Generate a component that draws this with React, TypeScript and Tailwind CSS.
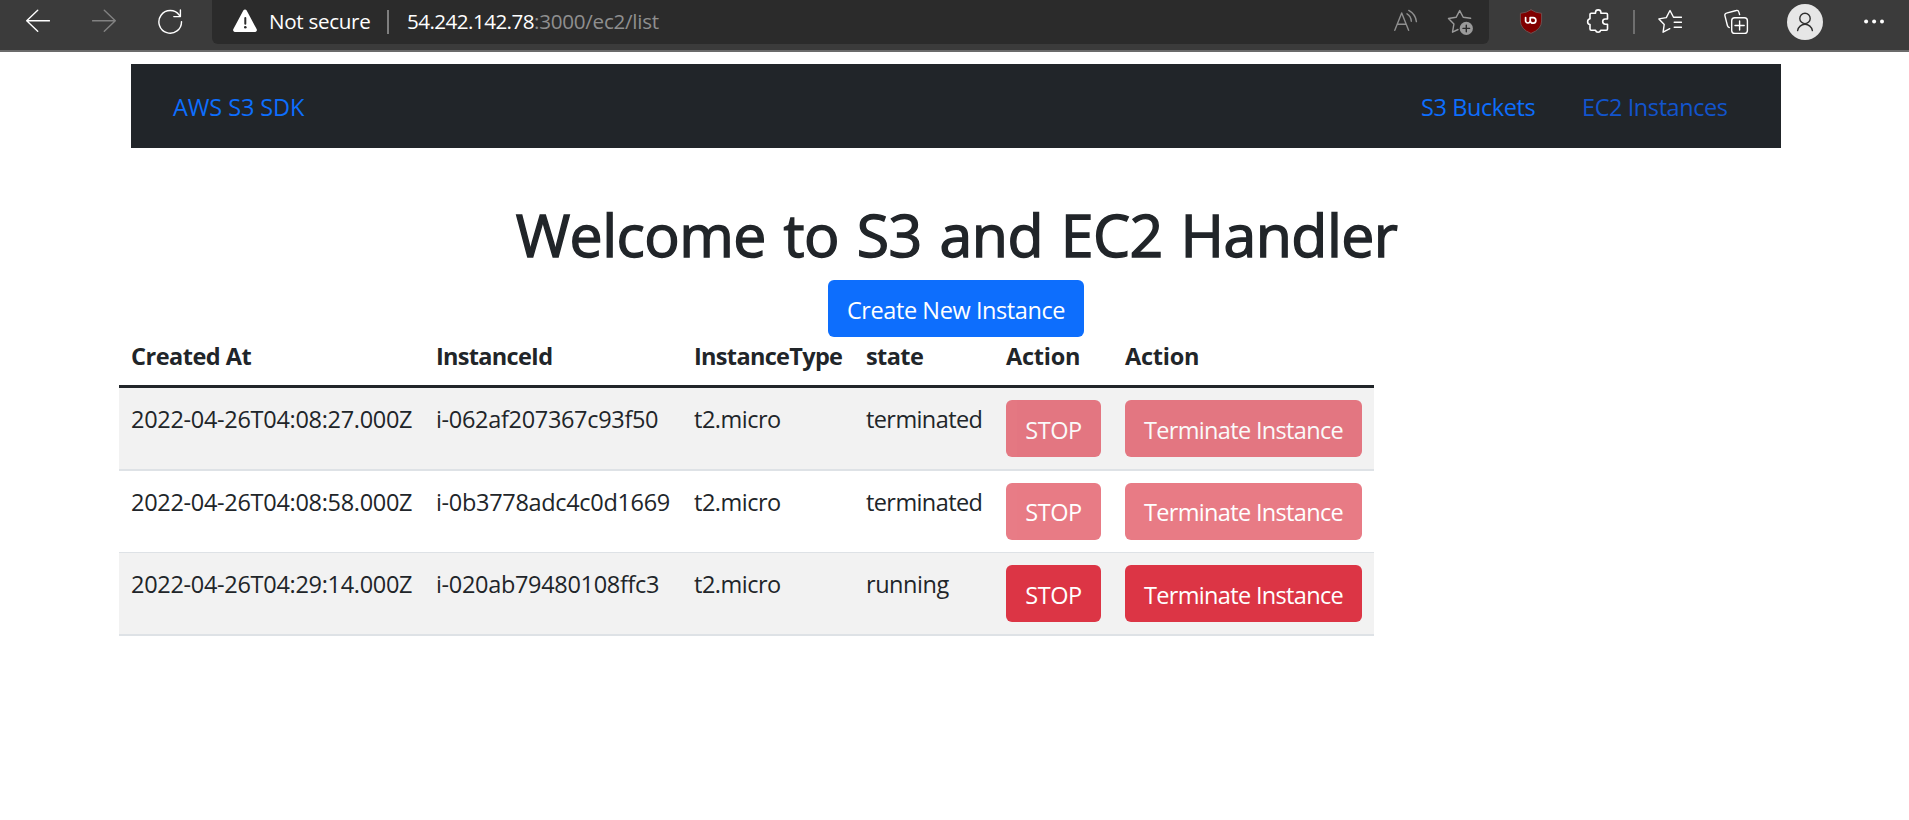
import type { ReactNode } from 'react';

type Row = {
  created: string;
  id: string;
  state: string;
  stateClass: string;
  cellClass: string;
  buttonClass: string;
  disabled: boolean;
};

const rows: Row[] = [
  {
    created: '2022-04-26T04:08:27.000Z',
    id: 'i-062af207367c93f50',
    state: 'terminated',
    stateClass: 'tracking-[-0.6px]',
    cellClass: 'h-[83px] border-b-2 bg-[#f2f2f2]',
    buttonClass: 'pt-3',
    disabled: true,
  },
  {
    created: '2022-04-26T04:08:58.000Z',
    id: 'i-0b3778adc4c0d1669',
    state: 'terminated',
    stateClass: 'tracking-[-0.6px]',
    cellClass: 'h-[82px] border-b bg-white',
    buttonClass: 'pt-[11px]',
    disabled: true,
  },
  {
    created: '2022-04-26T04:29:14.000Z',
    id: 'i-020ab79480108ffc3',
    state: 'running',
    stateClass: 'tracking-[-0.45px]',
    cellClass: 'h-[83px] border-b-2 bg-[#f2f2f2]',
    buttonClass: 'pt-3',
    disabled: false,
  },
];

const columns = [
  { label: 'Created At', width: 'w-[305px]', tracking: 'tracking-[-0.5px]' },
  { label: 'InstanceId', width: 'w-[258px]', tracking: 'tracking-[-0.7px]' },
  { label: 'InstanceType', width: 'w-[172px]', tracking: 'tracking-[-0.68px]' },
  { label: 'state', width: 'w-[140px]', tracking: 'tracking-[-0.6px]' },
  { label: 'Action', width: 'w-[119px]', tracking: 'tracking-[-0.25px]' },
  { label: 'Action', width: 'w-[261px]', tracking: 'tracking-[-0.25px]' },
];

function Icon({ children, className, size = 24 }: { children: ReactNode; className: string; size?: number }) {
  return (
    <svg
      width={size}
      height={size}
      viewBox={`0 0 ${size} ${size}`}
      fill="none"
      stroke="currentColor"
      strokeWidth="1.4"
      strokeLinecap="round"
      strokeLinejoin="round"
      className={`mt-[9px] shrink-0 ${className}`}
    >
      {children}
    </svg>
  );
}

function BrowserBar() {
  return (
    <header className="flex h-[52px] items-start border-b-2 border-[#6b6b6b] bg-[#3b3b3b] text-[20.6px] leading-[28px] text-white">
      <Icon className="ml-[26px]">
        <path d="M.7 11.7H23.4M11.7 1.2.7 11.7 11.7 22.2" />
      </Icon>
      <Icon className="ml-[42px] text-[#828282]">
        <path d="M.6 11.7H23.3M12.3 1.2l11 10.5-11 10.5" />
      </Icon>
      <Icon className="ml-[42px]" size={26}>
        <path d="M21.4 6.3A11.3 11.3 0 1 0 23.5 12.6M22.4 1v6.6H15.8" />
      </Icon>
      <div className="ml-7 flex h-11 w-[1277px] items-start rounded-b-md bg-[#2b2b2b]">
        <Icon className="ml-[21px]">
          <path d="M10.3 1.500a2 2 0 0 1 3.4 0l9.9 18.500a1.9 1.9 0 0 1-1.7 2.900H2.100A1.9 1.9 0 0 1 .4 20z" fill="#fff" stroke="none" />
          <path d="M12.3 9v5.8" stroke="#2b2b2b" strokeWidth="2" />
          <circle cx="12.3" cy="18.2" r="1.3" fill="#2b2b2b" stroke="none" />
        </Icon>
        <span className="mt-[7px] ml-3 w-[118px] tracking-[-0.3px] whitespace-nowrap">Not secure</span>
        <span className="mt-2.5 h-6 w-0.5 bg-[#7f7f7f]" />
        <span className="mt-[7px] ml-[18px] w-[127px] tracking-[-0.54px] whitespace-nowrap">54.242.142.78</span>
        <span className="mt-[7px] tracking-[-0.25px] whitespace-nowrap text-[#8f8f8f]">:3000/ec2/list</span>
        <Icon className="ml-auto text-[#8f8f8f]">
          <path d="M.8 21.3 7.7 4l6.9 17.3M3.2 15.3h9M13 4.8q4 2.4 4.300 7.4M14.8 1.4q6.8 3.800 7.6 11.2" />
        </Icon>
        <Icon className="mr-4 ml-[29px] text-[#9a9a9a]" size={26}>
          <path d="M23.6 9.3l-7.4-1L12.7 1.600 9.100 8.300l-7.600 1.200 5.400 5.600-1.400 8.100 5.500-2.700" />
          <circle cx="19.3" cy="19.4" r="6.6" fill="currentColor" stroke="none" />
          <path d="M19.3 16.1v6.6M16 19.4h6.6" stroke="#2b2b2b" />
        </Icon>
      </div>
      <Icon className="ml-[30px]" size={25}>
        <path d="M12 .8Q16.5 4 22.6 4.300V12q0 8.200-10.600 12.400Q1.400 20.200 1.400 12V4.300Q7.500 4 12 .8z" fill="#800000" stroke="#6b5050" strokeWidth="1" />
        <path d="M6.6 8.600v3a2.300 2.300 0 0 0 4.600.2V8.600h2.900a2.800 2.800 0 1 1-2.800 3.200" stroke="#fff" strokeWidth="1.7" />
      </Icon>
      <Icon className="ml-[42px]" size={25}>
        <path
          d="M5.200 4.300h4.300V3.600a2.700 2.700 0 0 1 5.400 0v.7h5.400a1.200 1.200 0 0 1 1.200 1.200v4.500h-2.200a2.600 2.600 0 0 0 0 5.200h2.200v4.900a1.200 1.200 0 0 1-1.200 1.200h-5.600a2.700 2.700 0 0 1-5.200 0H5.200a1.200 1.200 0 0 1-1.200-1.200v-4.600a2.900 2.900 0 0 1 0-5.700V5.500a1.200 1.200 0 0 1 1.200-1.200z"
          strokeWidth="1.6"
        />
      </Icon>
      <span className="mt-2.5 ml-[22px] h-6 w-0.5 bg-[#6f6f6f]" />
      <Icon className="ml-[23px]">
        <path d="M23.4 8.300h-7.900L12 1.500 8.300 8.600.9 9.900l5.300 5.600-1.100 7.700 6.700-3.500M16.200 13.300h7.200M16.200 18.300h7.200" />
      </Icon>
      <Icon className="ml-[41px]" size={26}>
        <path d="M16.6 5.600l-.8-2.700a2 2 0 0 0-2.500-1.400L3.400 4.100A2 2 0 0 0 1.900 6.600l2.500 9.900q.4 1.500 1.900 2.100" />
        <rect x="8.7" y="8.7" width="15.7" height="15.7" rx="3" />
        <path d="M16.6 11.9v9.2M12 16.5h9.2" />
      </Icon>
      <span className="mt-1 ml-[38px] flex size-9 shrink-0 rounded-full bg-[#e6e6e6]">
        <svg viewBox="0 0 36 36" fill="none" stroke="#2f2f2f" strokeWidth="1.4" strokeLinecap="round" className="size-9">
          <circle cx="18" cy="14.4" r="5.2" />
          <path d="M10.6 26.6a7.5 7.5 0 0 1 14.8 0" />
        </svg>
      </span>
      <Icon className="ml-[39px]">
        <g fill="currentColor" stroke="none">
          <circle cx="4.1" cy="12.5" r="2" />
          <circle cx="12.1" cy="12.5" r="2" />
          <circle cx="20" cy="12.5" r="2" />
        </g>
      </Icon>
    </header>
  );
}

export default function App() {
  return (
    <div className="h-[820px] overflow-hidden bg-white font-['Open_Sans',sans-serif] text-[23.5px] leading-9 whitespace-nowrap text-[#212529]">
      <BrowserBar />
      <nav className="mt-3 ml-[131px] flex h-[84px] w-[1650px] items-start bg-[#212529] pt-[25px] pl-[42px] text-[#0d6efd]">
        <a className="tracking-[-0.1px]">AWS S3 SDK</a>
        <a className="ml-auto w-[161px] tracking-[-0.42px]">S3 Buckets</a>
        <a className="w-[199px] tracking-[-0.42px] text-[#1254cc]">EC2 Instances</a>
      </nav>
      <main className="pt-[50px]">
        <h1 className="ml-1 text-center text-[59px] leading-[72px] font-medium tracking-[-0.55px] [word-spacing:3px] [-webkit-text-stroke:1.4px_#212529]">
          Welcome to S3 and EC2 Handler
        </h1>
        <div className="mt-2.5 ml-[3px] flex justify-center">
          <button className="flex h-[57px] w-64 justify-center rounded-md bg-[#0d6efd] pt-3 tracking-[-0.42px] text-white">
            Create New Instance
          </button>
        </div>
        <table className="ml-[119px] w-[1255px] table-fixed border-separate border-spacing-0 text-left">
          <thead>
            <tr>
              {columns.map((c, i) => (
                <th key={i} className={`h-[51px] border-b-[3px] border-[#212529] px-3 pt-px align-top font-bold ${c.width} ${c.tracking}`}>
                  {c.label}
                </th>
              ))}
            </tr>
          </thead>
          <tbody>
            {rows.map((r) => {
              const cell = `${r.cellClass} border-[#dee2e6] px-3 align-top`;
              const button = `flex h-[57px] w-full justify-center rounded-md bg-[#dc3545] text-white ${r.buttonClass} ${r.disabled ? 'opacity-65' : ''}`;
              return (
                <tr key={r.id}>
                  <td className={`${cell} pt-[13px] tracking-[-0.3px]`}>{r.created}</td>
                  <td className={`${cell} pt-[13px] tracking-[-0.32px]`}>{r.id}</td>
                  <td className={`${cell} pt-[13px] tracking-[-0.5px]`}>t2.micro</td>
                  <td className={`${cell} pt-[13px] ${r.stateClass}`}>{r.state}</td>
                  <td className={`${cell} pt-3`}>
                    <button disabled={r.disabled} className={`${button} tracking-[-0.4px]`}>STOP</button>
                  </td>
                  <td className={`${cell} pt-3`}>
                    <button disabled={r.disabled} className={`${button} tracking-[-0.66px]`}>Terminate Instance</button>
                  </td>
                </tr>
              );
            })}
          </tbody>
        </table>
      </main>
    </div>
  );
}
